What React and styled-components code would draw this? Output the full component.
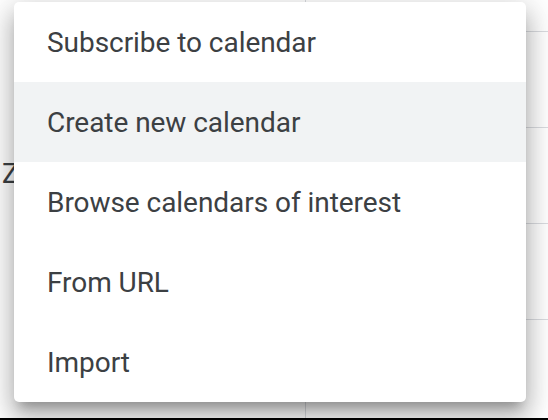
import React from "react";
import styled, { createGlobalStyle } from "styled-components";

const Global = createGlobalStyle`
  html, body { margin: 0; padding: 0; background: #ffffff; }
  body { font-family: Roboto, "Liberation Sans", Arial, sans-serif; }
  #root { width: 548px; height: 420px; overflow: hidden; }
`;

const Page = styled.div`
  position: relative;
  width: 548px;
  height: 420px;
  display: flex;
  flex-direction: column;
  background: #ffffff;
`;

const Calendar = styled.div`
  flex: 1;
  display: grid;
  grid-template-columns: 306px 1fr;
`;

const LeftColumn = styled.div`
  border-right: 1px solid #dadce0;
  padding-top: 160px;
  font-size: 28px;
  color: #3c4043;
  padding-left: 2px;
  line-height: 28px;
`;

const RightColumn = styled.div`
  display: grid;
  grid-template-rows: 32px 96px 96px 96px 1fr;
`;

const Cell = styled.div`
  border-bottom: ${(p) => (p.$last ? "none" : "1px solid #dadce0")};
`;

const BottomBar = styled.div`
  height: 2px;
  background: #000000;
`;

const Menu = styled.ul`
  position: absolute;
  left: 14px;
  top: 2px;
  width: 512px;
  margin: 0;
  padding: 0;
  list-style: none;
  background: #ffffff;
  border-radius: 5px;
  box-shadow: 0 16px 22px 2px rgba(0, 0, 0, 0.18),
    0 6px 30px 6px rgba(0, 0, 0, 0.14), 0 10px 10px -6px rgba(0, 0, 0, 0.24);
  overflow: hidden;
`;

const Item = styled.li`
  height: 80px;
  display: flex;
  align-items: center;
  padding-left: 33px;
  font-size: 28px;
  letter-spacing: -0.05px;
  color: #3c4043;
  background: ${(p) => (p.$active ? "#f1f3f4" : "transparent")};
`;

const items = [
  "Subscribe to calendar",
  "Create new calendar",
  "Browse calendars of interest",
  "From URL",
  "Import",
];

export default function App() {
  return (
    <>
      <Global />
      <Page>
        <Calendar>
          <LeftColumn>Z</LeftColumn>
          <RightColumn>
            <Cell />
            <Cell />
            <Cell />
            <Cell />
            <Cell $last />
          </RightColumn>
        </Calendar>
        <BottomBar />
        <Menu>
          {items.map((t, i) => (
            <Item key={t} $active={i === 1}>
              {t}
            </Item>
          ))}
        </Menu>
      </Page>
    </>
  );
}
